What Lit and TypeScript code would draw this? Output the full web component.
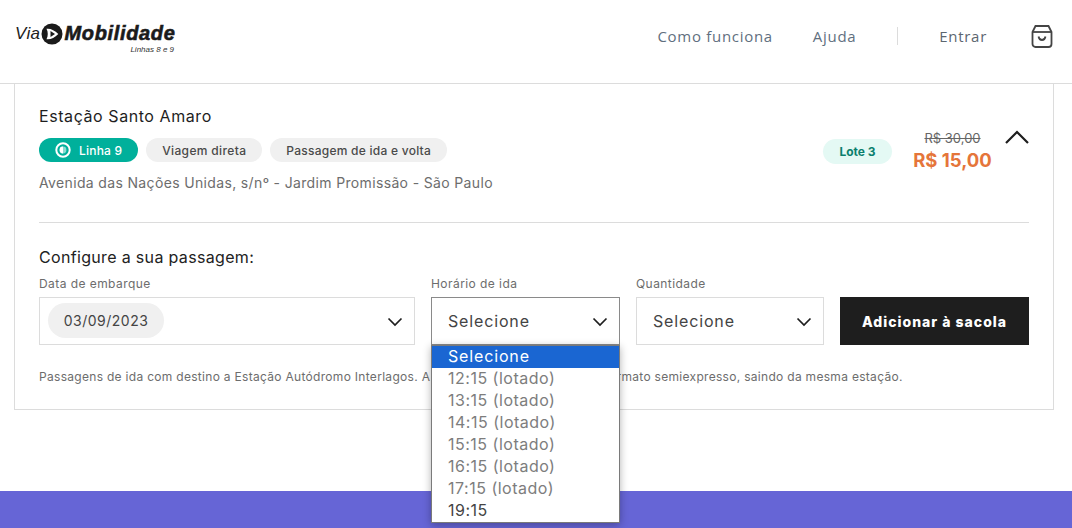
import { LitElement, html, css } from "lit";
import { customElement } from "lit/decorators.js";

const chevron = html`<svg class="chev" width="16" height="10" viewBox="0 0 16 10" fill="none"><path d="M1.500 1.500 8 8l6.500-6.500" stroke="#1e1e1e" stroke-width="1.700"/></svg>`;

@customElement("app-root")
export class AppRoot extends LitElement {
  static styles = css`
    :host { display: block; width: 1072px; height: 528px; position: relative; overflow: hidden; background: #fff; font-family: Inter, "Liberation Sans", sans-serif; color: #1e1e1e; }
    * { box-sizing: border-box; }
    header { height: 84px; border-bottom: 1px solid #dcdcdc; display: flex; align-items: center; padding: 0 19px 12px 15px; }
    .logo { display: flex; flex-direction: column; width: 161px; margin-top: 4px; }
    .logo-top { display: flex; align-items: center; height: 24px; }
    .via { font: italic 400 17px "Liberation Sans", sans-serif; letter-spacing: 0.4px; color: #222; }
    .logo-top svg { margin-left: 0; }
    .mob { font: italic 700 20px "Liberation Sans", sans-serif; -webkit-text-stroke: 0.6px #1b1b1b; color: #1b1b1b; letter-spacing: 0.65px; }
    .lin { font: italic 400 8px "Liberation Sans", sans-serif; color: #333; align-self: flex-end; margin: -1px 2px 0 0; }
    nav { margin-left: auto; display: flex; align-items: center; font-family: "Open Sans", sans-serif; font-size: 15px; color: #5f6f80; }
    nav a { display: block; letter-spacing: 0.7px; }
    .a2 { margin-left: 40px; }
    .sep { width: 1px; height: 18px; background: #dcdcdc; margin: 0 41px; }
    .a3 { color: #5c6670; }
    .bag { margin-left: 44px; display: block; }
    .card { margin: 0 18px 0 14px; height: 326px; border: 1px solid #dcdcdc; border-top: 0; padding: 0 24px; }
    .top { display: flex; height: 139px; border-bottom: 1px solid #dcdcdc; align-items: flex-start; }
    .info { flex: 1; padding-top: 23px; }
    .title { font-size: 16px; line-height: 19px; letter-spacing: 0.57px; color: #1e1e1e; }
    .tags { display: flex; gap: 8px; margin-top: 12px; }
    .tag { height: 24px; border-radius: 12px; background: #f0f0f0; padding: 0 16px; font-size: 12px; font-weight: 500; display: flex; align-items: center; color: #4a4a4a; letter-spacing: 0.2px; }
    .tag.vd { letter-spacing: 0.35px; }
    .tag.pd { letter-spacing: 0.25px; }
    .tag.line { background: #00b09b; color: #fff; gap: 8px; }
    .addr { margin-top: 12px; font-size: 14px; line-height: 18px; color: #6d6d6d; letter-spacing: 0.35px; }
    .lote { margin-top: 55px; height: 25px; width: 69px; border-radius: 13px; background: #e4f9f4; color: #0b7f6e; font-size: 12px; font-weight: 700; display: flex; align-items: center; justify-content: center; }
    .price { width: 87px; margin-left: 17px; text-align: center; padding-top: 46px; }
    .old { font-size: 13px; line-height: 17px; color: #666; text-decoration: line-through; }
    .new { font-size: 18.500px; line-height: 24px; font-weight: 700; color: #e5753a; margin-top: 1px; }
    .up { margin: 46px 0 0 9px; display: block; }
    .cfg { padding-top: 25px; }
    .cfg-t { font-size: 16px; line-height: 19px; letter-spacing: 0.33px; color: #222; }
    .row { display: grid; grid-template-columns: 376px 189px 188px 189px; column-gap: 16px; margin-top: 9px; }
    .f label { display: block; font-size: 12px; line-height: 16px; color: #6d6d6d; letter-spacing: 0.44px; height: 21px; }
    .box { height: 48px; border: 1px solid #dcdcdc; display: flex; align-items: center; justify-content: space-between; padding: 0 11px 1px 16px; font-size: 16px; color: #444; letter-spacing: 0.85px; }
    .chev { margin-top: 2px; }
    .box.open { border-color: #8a8a8a; }
    .box.date { padding-left: 8px; }
    .pill { height: 35px; width: 116px; border-radius: 18px; background: #f0f0f0; display: flex; align-items: center; justify-content: center; font-size: 14px; letter-spacing: 0.5px; color: #444; }
    .btn { height: 48px; margin-top: 21px; background: #1e1e1e; color: #fff; font-size: 14px; font-weight: 800; display: flex; align-items: center; justify-content: center; letter-spacing: 1px; }
    .note { margin-top: 24px; font-size: 12px; line-height: 16px; color: #6d6d6d; letter-spacing: 0.3px; white-space: nowrap; }
    .foot { position: absolute; left: 0; right: 0; top: 491px; height: 37px; background: #6665d6; }
    .menu { position: absolute; left: 431px; top: 345px; width: 189px; height: 178px; background: #fff; border: 1px solid #7a7a7a; box-shadow: 0 2px 8px rgba(0,0,0,.3); font-size: 16px; letter-spacing: 0.5px; }
    .opt { height: 22px; line-height: 21px; padding-left: 16px; color: #7d7d7d; }
    .opt.sel { background: #1a66d2; color: #fff; letter-spacing: 0.85px; }
    .opt.ok { color: #444; }
  `;

  render() {
    const times = ["12:15", "13:15", "14:15", "15:15", "16:15", "17:15"];
    return html`
      <header>
        <div class="logo">
          <div class="logo-top">
            <span class="via">Via</span>
            <svg width="24" height="24" viewBox="0 0 24 24"><circle cx="12" cy="12" r="10.500" fill="#1b1b1b"/><path d="M6.500 6.800c4-.6 8 1.500 11.800 5.200-3.800 3.700-7.800 5.800-11.800 5.200 1.700-3.200 1.700-7.200 0-10.400z" fill="#fff"/><path d="M10.500 9 15 12l-4.500 3z" fill="#1b1b1b"/></svg>
            <span class="mob">Mobilidade</span>
          </div>
          <span class="lin">Linhas 8 e 9</span>
        </div>
        <nav>
          <a>Como funciona</a>
          <a class="a2">Ajuda</a>
          <span class="sep"></span>
          <a class="a3">Entrar</a>
          <svg class="bag" width="22" height="24" viewBox="0 0 22 24" fill="none" stroke="#444" stroke-width="1.800"><path d="M4.500 2h13l3 6v12a3 3 0 0 1-3 3h-13a3 3 0 0 1-3-3V8z"/><path d="M1.500 8h19"/><path d="M7.500 12.500c.5 2.500 2 3.500 3.500 3.500s3-1 3.500-3.500"/></svg>
        </nav>
      </header>
      <section class="card">
        <div class="top">
          <div class="info">
            <div class="title">Estação Santo Amaro</div>
            <div class="tags">
              <span class="tag line">
                <svg width="16" height="16" viewBox="0 0 16 16"><circle cx="8" cy="8" r="6.700" fill="none" stroke="#fff" stroke-width="2"/><circle cx="8" cy="8" r="3.400" fill="#fff" fill-opacity=".55"/><path d="M8 4.600a3.400 3.400 0 0 0 0 6.800z" fill="#fff"/></svg>
                Linha 9
              </span>
              <span class="tag vd">Viagem direta</span>
              <span class="tag pd">Passagem de ida e volta</span>
            </div>
            <div class="addr">Avenida das Nações Unidas, s/nº - Jardim Promissão - São Paulo</div>
          </div>
          <div class="lote">Lote 3</div>
          <div class="price">
            <div class="old">R$ 30,00</div>
            <div class="new">R$ 15,00</div>
          </div>
          <svg class="up" width="24" height="14" viewBox="0 0 24 14" fill="none"><path d="M1 13 12 2l11 11" stroke="#1e1e1e" stroke-width="2.200"/></svg>
        </div>
        <div class="cfg">
          <div class="cfg-t">Configure a sua passagem:</div>
          <div class="row">
            <div class="f"><label>Data de embarque</label><div class="box date"><span class="pill">03/09/2023</span>${chevron}</div></div>
            <div class="f"><label>Horário de ida</label><div class="box open"><span>Selecione</span>${chevron}</div></div>
            <div class="f"><label>Quantidade</label><div class="box"><span>Selecione</span>${chevron}</div></div>
            <div class="btn">Adicionar à sacola</div>
          </div>
          <div class="note">Passagens de ida com destino a Estação Autódromo Interlagos. A volta é efetuada em trem de formato semiexpresso, saindo da mesma estação.</div>
        </div>
      </section>
      <div class="foot"></div>
      <div class="menu">
        <div class="opt sel">Selecione</div>
        ${times.map((t) => html`<div class="opt">${t} (lotado)</div>`)}
        <div class="opt ok">19:15</div>
      </div>
    `;
  }
}
